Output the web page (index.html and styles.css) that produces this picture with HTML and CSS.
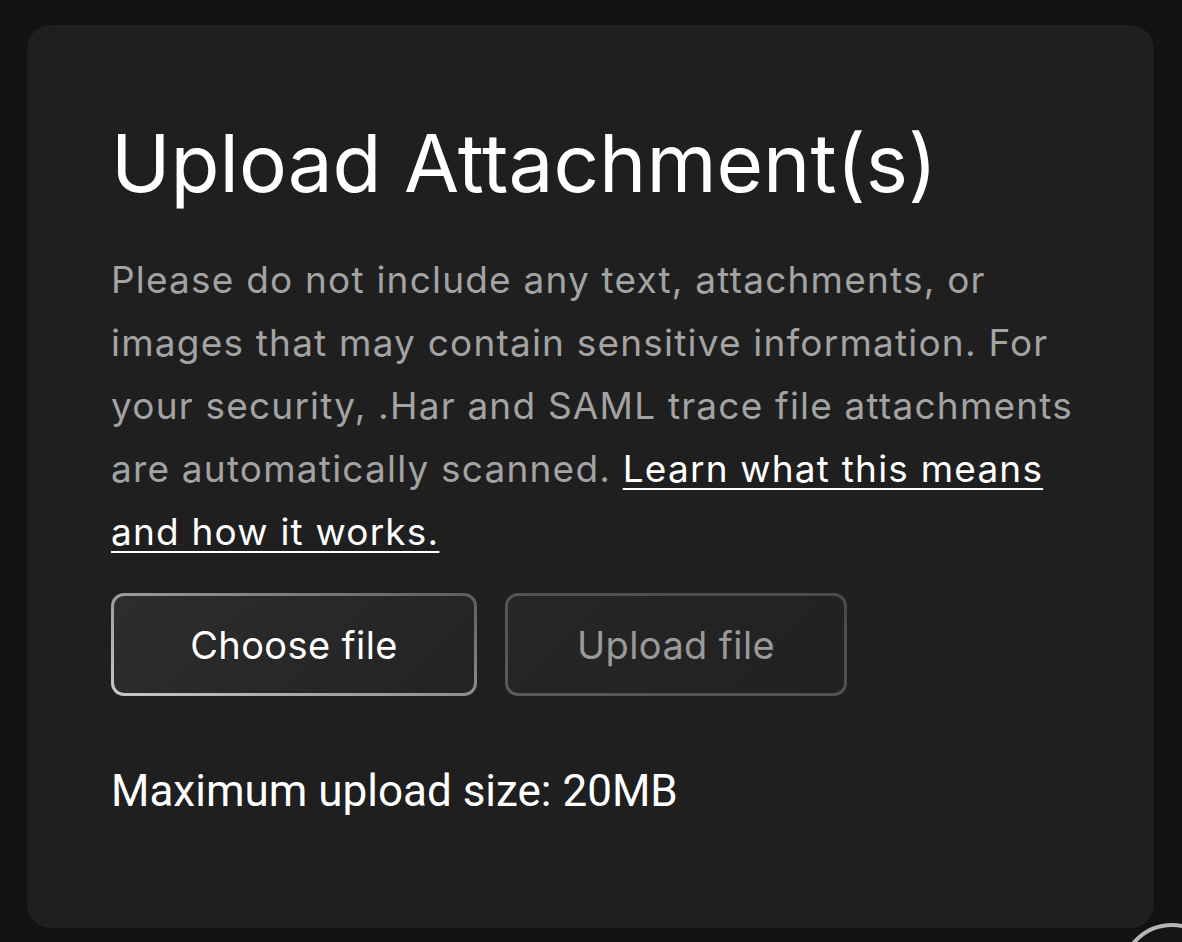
FILE: index.html
```html
<!DOCTYPE html>
<html lang="en">
<head>
<meta charset="utf-8">
<title>Upload Attachment(s)</title>
<link rel="stylesheet" href="styles.css">
</head>
<body>
<main class="card">
  <h1 class="title">Upload Attachment(s)</h1>
  <p class="desc">Please do not include any text, attachments, or images that may contain sensitive information. For your security, .Har and SAML trace file attachments are automatically scanned. <a class="link" href="#">Learn what this means and how it works.</a></p>
  <div class="actions">
    <button class="btn btn-choose" type="button">Choose file</button>
    <button class="btn btn-upload" type="button" disabled>Upload file</button>
  </div>
  <p class="limit">Maximum upload size: 20MB</p>
</main>
<div class="corner"></div>
</body>
</html>
```

FILE: styles.css
```css
html, body {
  margin: 0;
  padding: 0;
  background: #121212;
  height: 100%;
  overflow: hidden;
}
body {
  position: relative;
  font-family: "Inter", "Liberation Sans", sans-serif;
  padding: 25px 0 0 27px;
  box-sizing: border-box;
}
.card {
  width: 1127px;
  height: 903px;
  box-sizing: border-box;
  background: #1f1f1f;
  border-radius: 24px;
  padding: 90px 60px 0 84px;
}
.title {
  margin: 0;
  font-size: 80px;
  line-height: 96px;
  font-weight: 400;
  color: #ffffff;
  letter-spacing: 0;
}
.desc {
  margin: 37px 0 0 0;
  font-size: 37px;
  line-height: 63px;
  color: #a3a3a3;
  font-weight: 400;
  letter-spacing: 1.2px;
}
.link {
  color: #ffffff;
  text-decoration: underline;
  text-decoration-thickness: 2px;
  text-underline-offset: 6px;
}
.actions {
  display: flex;
  gap: 28px;
  margin-top: 30px;
}
.btn {
  height: 103px;
  box-sizing: border-box;
  border-radius: 13px;
  border: 3px solid transparent;
  font-family: "Inter", "Liberation Sans", sans-serif;
  font-size: 38px;
  letter-spacing: 0.4px;
  padding: 0;
}
.btn-choose {
  width: 366px;
  color: #ffffff;
  background:
    linear-gradient(135deg, #2d2d2d, #232323) padding-box,
    linear-gradient(20deg, #c8c8c8 0%, #9a9a9a 45%, #5c5c5c 100%) border-box;
}
.btn-upload {
  width: 342px;
  color: #9a9a9a;
  background:
    linear-gradient(135deg, #262626, #212121) padding-box,
    linear-gradient(20deg, #5a5a5a, #4a4a4a) border-box;
}
.limit {
  margin: 71px 0 0 0;
  font-family: "Roboto", "Liberation Sans", sans-serif;
  font-size: 44px;
  line-height: 49px;
  color: #ffffff;
}
.corner {
  position: absolute;
  left: 1120px;
  top: 923px;
  width: 62px;
  height: 19px;
  overflow: hidden;
}
.corner::before {
  content: "";
  position: absolute;
  left: 0;
  top: 0;
  width: 104px;
  height: 104px;
  border-radius: 50%;
  border: 4px solid #b5b5b5;
  background: #151515;
  box-sizing: border-box;
}
```
